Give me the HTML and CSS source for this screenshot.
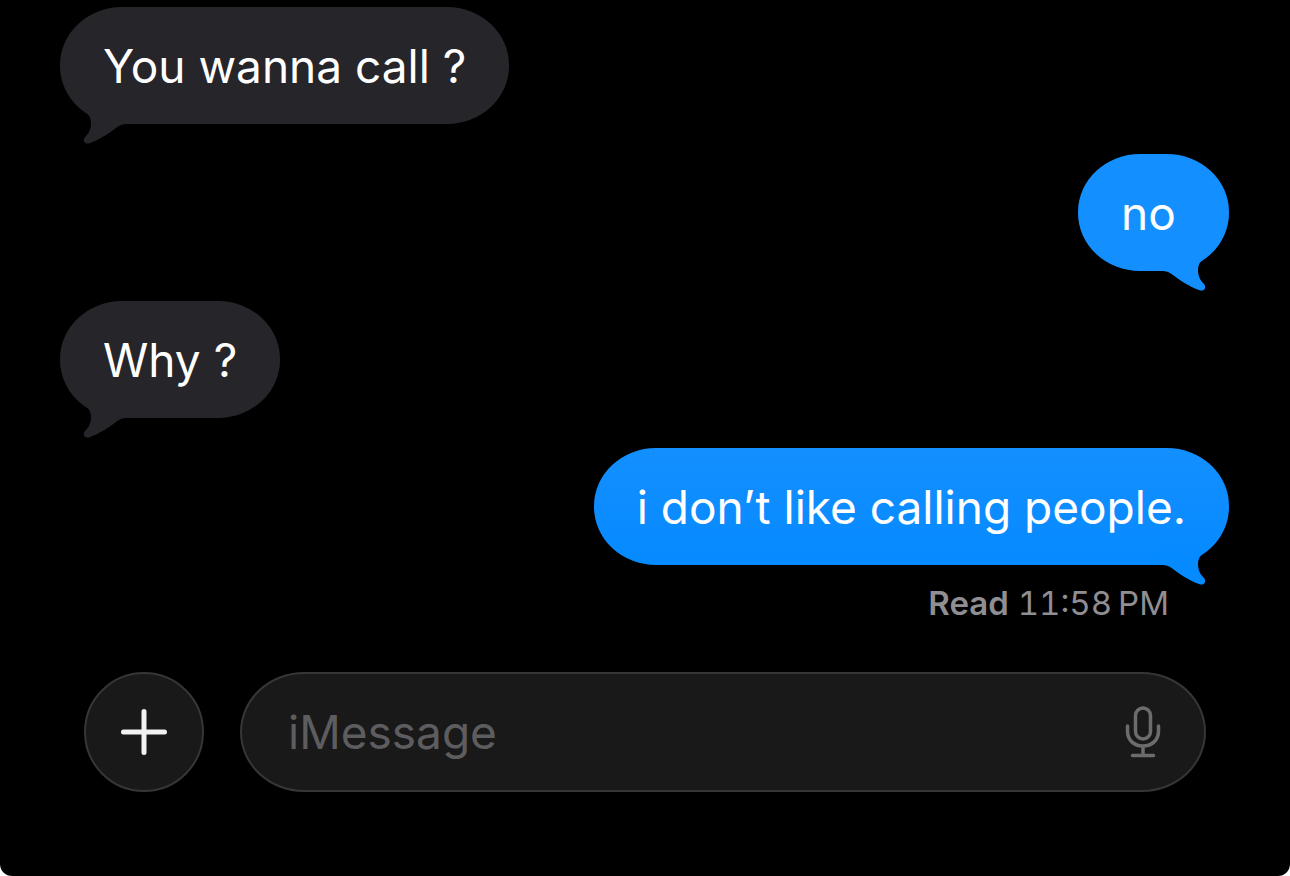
FILE: index.html
```html
<!DOCTYPE html>
<html lang="en">
<head>
    <meta charset="UTF-8">
    <meta name="viewport" content="width=device-width, initial-scale=1.0">
    <title>Messages</title>
    <link rel="stylesheet" href="styles.css">
</head>
<body>
    <svg class="defs" width="0" height="0" aria-hidden="true">
        <symbol id="tail" viewBox="0 0 70 52">
            <path d="M19 12 C27 17 31 21 31 28 C31 34 29 38 25 42 C22 46 25 50 30 48 C41 44 49 38 56 33 C61 29 64 29 70 29 L70 12 Z"/>
        </symbol>
    </svg>

    <main class="chat">
        <div class="bubble received">You wanna call ?<svg class="tail" aria-hidden="true"><use href="#tail"/></svg></div>
        <div class="bubble sent">no<svg class="tail" aria-hidden="true"><use href="#tail"/></svg></div>
        <div class="bubble received">Why ?<svg class="tail" aria-hidden="true"><use href="#tail"/></svg></div>
        <div class="bubble sent last">i don’t like calling people.<svg class="tail" aria-hidden="true"><use href="#tail"/></svg></div>
        <div class="receipt"><b>Read</b> 11:58&#8239;PM</div>
    </main>

    <form class="composer">
        <button class="round-button" type="button" aria-label="Add attachment">
            <svg width="48" height="48" viewBox="0 0 48 48" fill="none" stroke="currentColor" stroke-width="5" stroke-linecap="round">
                <path d="M24 3.500V44.500M3.500 24H44.500"/>
            </svg>
        </button>
        <div class="field">
            <input type="text" placeholder="iMessage" aria-label="iMessage">
            <button class="mic" type="button" aria-label="Dictate">
                <svg width="36" height="52" viewBox="0 0 36 52" fill="none" stroke="currentColor" stroke-width="3.500" stroke-linecap="round">
                    <rect x="10.500" y="2" width="15" height="31" rx="7.500"/>
                    <path d="M2.500 20V25C2.500 34 9 40 18 40S33.500 34 33.500 25V20M18 40V49.500M7.500 49.500H28.500"/>
                </svg>
            </button>
        </div>
    </form>
</body>
</html>
```

FILE: styles.css
```css
:root {
    --received: #26252a;
    --sent: #148fff;
    --sent-end: #058aff;
    --field: #191919;
    --edge: #363636;
    --muted: #8e8e93;
}
* {
    box-sizing: border-box;
}
html {
    background: white;
}
body {
    font-family: 'Inter', sans-serif;
    background: black;
    color: white;
    margin: 0;
    min-height: 100vh;
    border-radius: 0 0 12px 12px;
}
.defs {
    display: block;
}
.chat {
    display: flex;
    flex-direction: column;
    align-items: flex-start;
    gap: 30px;
    padding: 7px 61px 0 60px;
}
.bubble {
    position: relative;
    min-width: 151px;
    padding: 30px 43px 29px;
    border-radius: 62px / 58px;
    font-size: 46px;
    line-height: 58px;
}
.received {
    background: var(--received);
    color: white;
}
.sent {
    align-self: flex-end;
    background: var(--sent);
}
.last {
    background: linear-gradient(var(--sent), var(--sent-end));
}
/* tail hangs below the bubble corner */
.tail {
    position: absolute;
    left: 0;
    bottom: -23px;
    width: 70px;
    height: 52px;
    fill: var(--received);
}
.sent .tail {
    left: auto;
    right: 0;
    fill: var(--sent);
    transform: scaleX(-1);
}
.last .tail {
    fill: var(--sent-end);
}
.receipt {
    align-self: flex-end;
    margin-top: -12px;
    padding-right: 60px;
    color: var(--muted);
    font-size: 33px;
    font-variant-numeric: tabular-nums;
    line-height: 40px;
}
.receipt b {
    font-weight: 600;
}
.composer {
    display: flex;
    gap: 36px;
    padding: 49px 84px 83px;
}
.round-button,
.field {
    height: 120px;
    border: 2px solid var(--edge);
    background: var(--field);
}
.round-button {
    display: flex;
    align-items: center;
    justify-content: center;
    flex: none;
    width: 120px;
    padding: 0;
    border-radius: 50%;
    color: #f2f2f2;
}
.field {
    display: flex;
    align-items: center;
    flex: 1;
    padding: 0 43px 0 46px;
    border-radius: 64px / 60px;
}
.field input {
    flex: 1;
    min-width: 0;
    padding: 0;
    border: none;
    outline: none;
    background: none;
    color: white;
    font-family: inherit;
    font-size: 46px;
}
.field input::placeholder {
    color: #5d5d5f;
}
.mic {
    display: flex;
    padding: 0;
    border: none;
    background: none;
    color: #6c6c6e;
}
```
